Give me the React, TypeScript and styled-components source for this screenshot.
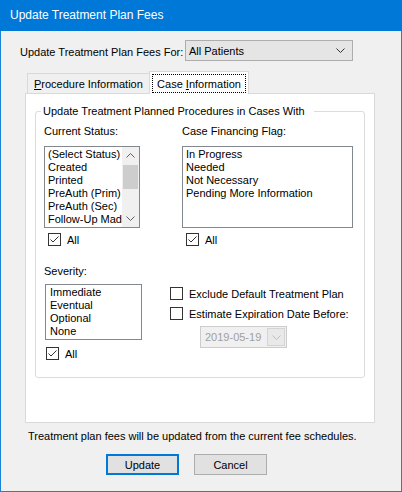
import React from "react";
import styled, { createGlobalStyle } from "styled-components";

const GlobalStyle = createGlobalStyle`
  html, body {
    margin: 0;
    padding: 0;
    background: #ffffff;
  }

  body {
    font-family: "Liberation Sans", Arial, sans-serif;
    font-size: 11px;
    color: #000000;
  }
`;

const Window = styled.div`
  width: 402px;
  height: 492px;
  box-sizing: border-box;
  border: 1px solid #1883d7;
  border-top: none;
  background: #f0f0f0;

  display: flex;
  flex-direction: column;
`;

const TitleBar = styled.div`
  height: 31px;
  margin: 0 -1px;
  padding-left: 10px;

  background: #0078d7;
  color: #ffffff;

  font-size: 12px;
  line-height: 31px;
`;

const FeesRow = styled.div`
  margin-top: 9px;
  padding-left: 19px;

  display: flex;
  align-items: center;
  height: 21px;
`;

const FeesLabel = styled.label`
  flex: 0 0 165px;
  padding-top: 2px;
`;

const ComboBox = styled.div<{ $width: number }>`
  width: ${(p) => p.$width}px;
  height: 21px;
  box-sizing: border-box;

  border: 1px solid #adadad;
  background: #e5e5e5;

  display: flex;
  align-items: center;
  justify-content: space-between;
  padding: 0 7px 0 3px;
`;

const TabStrip = styled.div`
  margin-top: 10px;
  margin-left: 26px;
  height: 22px;

  display: flex;
  align-items: flex-end;
`;

const Tab = styled.div<{ $active?: boolean; $width: number }>`
  position: relative;
  z-index: ${(p) => (p.$active ? 1 : 0)};

  width: ${(p) => p.$width}px;
  height: ${(p) => (p.$active ? 23 : 20)}px;
  box-sizing: border-box;
  margin-bottom: ${(p) => (p.$active ? -1 : 0)}px;

  border: 1px solid #d9d9d9;
  border-bottom: none;
  border-right: ${(p) => (p.$active ? "1px solid #d9d9d9" : "none")};
  background: ${(p) => (p.$active ? "#ffffff" : "#f0f0f0")};

  display: flex;
  align-items: center;
  justify-content: ${(p) => (p.$active ? "center" : "flex-start")};
  padding-left: ${(p) => (p.$active ? 0 : 6)}px;
`;

const FocusRect = styled.span`
  display: flex;
  align-items: center;
  justify-content: center;

  width: 94px;
  height: 19px;
  box-sizing: border-box;
  margin-top: 1px;

  border: 1px dotted #000000;
`;

const Key = styled.span`
  text-decoration: underline;
`;

const Panel = styled.div`
  margin-left: 24px;
  width: 350px;
  height: 330px;
  box-sizing: border-box;

  border: 1px solid #d9d9d9;
  background: #ffffff;

  padding: 11px 0 0 9px;
`;

const GroupBox = styled.fieldset`
  width: 330px;
  box-sizing: border-box;
  margin: 0;
  min-width: 0;

  border: 1px solid #dcdcdc;
  border-radius: 3px;

  padding: 7px 0 17px 8px;
`;

const Legend = styled.legend`
  margin-left: -3px;
  padding: 0 9px 0 2px;
  line-height: 13px;
`;

const Section = styled.div<{ $cols: string; $top?: number }>`
  display: grid;
  grid-template-columns: ${(p) => p.$cols};
  margin-top: ${(p) => p.$top ?? 0}px;
`;

const Column = styled.div<{ $pad?: number }>`
  display: flex;
  flex-direction: column;
  align-items: flex-start;
  padding-top: ${(p) => p.$pad ?? 0}px;
`;

const FieldLabel = styled.div`
  line-height: 13px;
`;

const ListBox = styled.div<{ $width: number; $height: number; $top: number; $indent: number }>`
  width: ${(p) => p.$width}px;
  height: ${(p) => p.$height}px;
  box-sizing: border-box;
  margin-top: ${(p) => p.$top}px;
  margin-left: ${(p) => p.$indent}px;

  border: 1px solid #828790;
  background: #ffffff;

  display: flex;
  overflow: hidden;
`;

const ListItems = styled.div<{ $pad: number }>`
  flex: 1;
  min-width: 0;
  padding: 1px 0 0 ${(p) => p.$pad}px;
  overflow: hidden;
`;

const ListItem = styled.div`
  line-height: 13px;
  white-space: nowrap;
`;

const ScrollBar = styled.div`
  flex: 0 0 17px;
  background: #f0f0f0;

  display: flex;
  flex-direction: column;
`;

const ScrollArrow = styled.div`
  height: 17px;
  display: flex;
  align-items: center;
  justify-content: center;
`;

const ScrollTrack = styled.div`
  flex: 1;
  padding: 1px 1px 0;
`;

const ScrollThumb = styled.div`
  height: 24px;
  background: #cdcdcd;
`;

const CheckRow = styled.label<{ $top: number; $indent: number }>`
  display: flex;
  align-items: center;
  gap: 6px;
  height: 13px;
  margin-top: ${(p) => p.$top}px;
  margin-left: ${(p) => p.$indent}px;
`;

const Box = styled.span`
  width: 13px;
  height: 13px;
  box-sizing: border-box;
  border: 1px solid #333333;
  background: #ffffff;

  display: flex;
  align-items: center;
  justify-content: center;
`;

const CheckText = styled.span`
  line-height: 13px;
  padding-top: 1px;
`;

const DatePicker = styled.div`
  width: 87px;
  height: 22px;
  box-sizing: border-box;
  margin-top: 6px;
  margin-left: 30px;

  border: 1px solid #cccccc;
  background: #f0f0f0;
  color: #a0a0a0;

  display: flex;
  align-items: stretch;
`;

const DateText = styled.span`
  flex: 1;
  display: flex;
  align-items: center;
  padding-left: 4px;
`;

const DateButton = styled.span`
  flex: 0 0 16px;
  margin: 1px;
  border: 1px solid #d4d4d4;
  background: #e9e9e9;

  display: flex;
  align-items: center;
  justify-content: center;
`;

const Footnote = styled.div`
  margin-top: 7px;
  padding-left: 27px;
  line-height: 13px;
`;

const ButtonRow = styled.div`
  margin-top: 11px;
  padding-left: 105px;

  display: flex;
  gap: 15px;
`;

const Button = styled.button<{ $default?: boolean }>`
  width: 73px;
  height: 21px;
  box-sizing: border-box;
  padding: 0;

  border: ${(p) => (p.$default ? "2px solid #0078d7" : "1px solid #adadad")};
  background: #e1e1e1;

  font-family: "Liberation Sans", Arial, sans-serif;
  font-size: 11px;
  color: #000000;
`;

const Chevron = ({ up, color }: { up?: boolean; color: string }) => (
  <svg width="9" height="5" viewBox="0 0 9 5">
    <polyline
      points={up ? "0.5,4.5 4.5,0.5 8.5,4.5" : "0.5,0.5 4.5,4.5 8.5,0.5"}
      fill="none"
      stroke={color}
      strokeWidth="1"
    />
  </svg>
);

const CheckBox = ({
  label,
  checked,
  top,
  indent,
}: {
  label: string;
  checked?: boolean;
  top: number;
  indent: number;
}) => (
  <CheckRow $top={top} $indent={indent}>
    <Box>
      {checked && (
        <svg width="11" height="11" viewBox="0 0 11 11">
          <polyline points="1.5,5.5 4,8 9.5,2.5" fill="none" stroke="#333333" strokeWidth="1" />
        </svg>
      )}
    </Box>
    <CheckText>{label}</CheckText>
  </CheckRow>
);

const statuses = [
  "(Select Status)",
  "Created",
  "Printed",
  "PreAuth (Prim)",
  "PreAuth (Sec)",
  "Follow-Up Made",
];

const flags = ["In Progress", "Needed", "Not Necessary", "Pending More Information"];

const severities = ["Immediate", "Eventual", "Optional", "None"];

export default function App() {
  return (
    <>
      <GlobalStyle />
      <Window>
        <TitleBar>Update Treatment Plan Fees</TitleBar>

        <FeesRow>
          <FeesLabel>Update Treatment Plan Fees For:</FeesLabel>
          <ComboBox $width={168}>
            <span>All Patients</span>
            <Chevron color="#333333" />
          </ComboBox>
        </FeesRow>

        <TabStrip>
          <Tab $width={122}>
            <span>
              <Key>P</Key>rocedure Information
            </span>
          </Tab>
          <Tab $active $width={100}>
            <FocusRect>
              Case&nbsp;<Key>I</Key>nformation
            </FocusRect>
          </Tab>
        </TabStrip>

        <Panel>
          <GroupBox>
            <Legend>Update Treatment Planned Procedures in Cases With</Legend>

            <Section $cols="138px 1fr">
              <Column>
                <FieldLabel>Current Status:</FieldLabel>
                <ListBox $width={96} $height={82} $top={8} $indent={0}>
                  <ListItems $pad={3}>
                    {statuses.map((s) => (
                      <ListItem key={s}>{s}</ListItem>
                    ))}
                  </ListItems>
                  <ScrollBar>
                    <ScrollArrow>
                      <Chevron up color="#606060" />
                    </ScrollArrow>
                    <ScrollTrack>
                      <ScrollThumb />
                    </ScrollTrack>
                    <ScrollArrow>
                      <Chevron color="#606060" />
                    </ScrollArrow>
                  </ScrollBar>
                </ListBox>
                <CheckBox label="All" checked top={5} indent={4} />
              </Column>
              <Column>
                <FieldLabel>Case Financing Flag:</FieldLabel>
                <ListBox $width={171} $height={82} $top={8} $indent={0}>
                  <ListItems $pad={3}>
                    {flags.map((f) => (
                      <ListItem key={f}>{f}</ListItem>
                    ))}
                  </ListItems>
                </ListBox>
                <CheckBox label="All" checked top={5} indent={4} />
              </Column>
            </Section>

            <Section $cols="126px 1fr" $top={19}>
              <Column>
                <FieldLabel>Severity:</FieldLabel>
                <ListBox $width={97} $height={56} $top={6} $indent={1}>
                  <ListItems $pad={4}>
                    {severities.map((s) => (
                      <ListItem key={s}>{s}</ListItem>
                    ))}
                  </ListItems>
                </ListBox>
                <CheckBox label="All" checked top={7} indent={2} />
              </Column>
              <Column $pad={22}>
                <CheckBox label="Exclude Default Treatment Plan" top={0} indent={0} />
                <CheckBox label="Estimate Expiration Date Before:" top={7} indent={0} />
                <DatePicker>
                  <DateText>2019-05-19</DateText>
                  <DateButton>
                    <Chevron color="#bfbfbf" />
                  </DateButton>
                </DatePicker>
              </Column>
            </Section>
          </GroupBox>
        </Panel>

        <Footnote>Treatment plan fees will be updated from the current fee schedules.</Footnote>

        <ButtonRow>
          <Button $default>Update</Button>
          <Button>Cancel</Button>
        </ButtonRow>
      </Window>
    </>
  );
}
